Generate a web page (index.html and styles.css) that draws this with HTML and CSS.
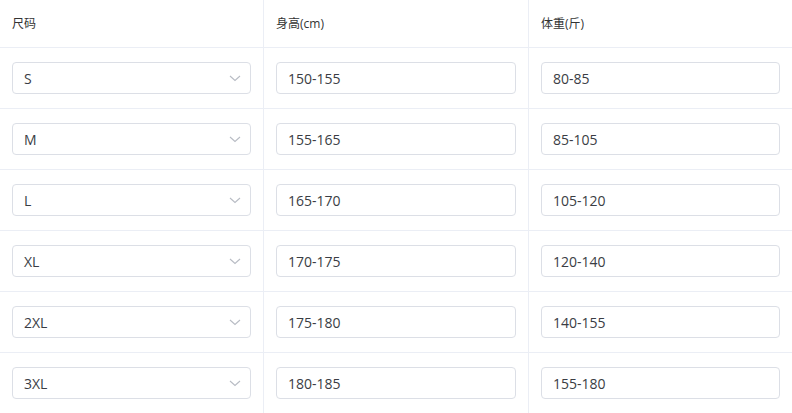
FILE: index.html
```html
<!DOCTYPE html>
<html lang="zh">
<head>
<meta charset="utf-8">
<link rel="stylesheet" href="styles.css">
</head>
<body>
<div class="table">
  <div class="cell head">尺码</div>
  <div class="cell head">身高(cm)</div>
  <div class="cell head last">体重(斤)</div>

  <div class="cell"><div class="select"><span>S</span><svg class="chev" viewBox="0 0 12 7" width="12" height="7"><path d="M1 1 L6 5.5 L11 1" fill="none" stroke="#b8bcc4" stroke-width="1.1"/></svg></div></div>
  <div class="cell"><div class="input">150-155</div></div>
  <div class="cell last"><div class="input">80-85</div></div>

  <div class="cell"><div class="select"><span>M</span><svg class="chev" viewBox="0 0 12 7" width="12" height="7"><path d="M1 1 L6 5.5 L11 1" fill="none" stroke="#b8bcc4" stroke-width="1.1"/></svg></div></div>
  <div class="cell"><div class="input">155-165</div></div>
  <div class="cell last"><div class="input">85-105</div></div>

  <div class="cell"><div class="select"><span>L</span><svg class="chev" viewBox="0 0 12 7" width="12" height="7"><path d="M1 1 L6 5.5 L11 1" fill="none" stroke="#b8bcc4" stroke-width="1.1"/></svg></div></div>
  <div class="cell"><div class="input">165-170</div></div>
  <div class="cell last"><div class="input">105-120</div></div>

  <div class="cell"><div class="select"><span>XL</span><svg class="chev" viewBox="0 0 12 7" width="12" height="7"><path d="M1 1 L6 5.5 L11 1" fill="none" stroke="#b8bcc4" stroke-width="1.1"/></svg></div></div>
  <div class="cell"><div class="input">170-175</div></div>
  <div class="cell last"><div class="input">120-140</div></div>

  <div class="cell"><div class="select"><span>2XL</span><svg class="chev" viewBox="0 0 12 7" width="12" height="7"><path d="M1 1 L6 5.5 L11 1" fill="none" stroke="#b8bcc4" stroke-width="1.1"/></svg></div></div>
  <div class="cell"><div class="input">175-180</div></div>
  <div class="cell last"><div class="input">140-155</div></div>

  <div class="cell"><div class="select"><span>3XL</span><svg class="chev" viewBox="0 0 12 7" width="12" height="7"><path d="M1 1 L6 5.5 L11 1" fill="none" stroke="#b8bcc4" stroke-width="1.1"/></svg></div></div>
  <div class="cell"><div class="input">180-185</div></div>
  <div class="cell last"><div class="input">155-180</div></div>
</div>
</body>
</html>
```

FILE: styles.css
```css
html, body {
  margin: 0;
  padding: 0;
  background: #fff;
}
body {
  font-family: "Open Sans", "Noto Sans CJK SC", sans-serif;
  color: #303133;
  overflow: hidden;
}
.table {
  display: grid;
  grid-template-columns: 264px 265px 263px;
  grid-template-rows: 48px repeat(6, 61px);
  width: 792px;
}
.cell {
  box-sizing: border-box;
  border-right: 1px solid #ebeef5;
  border-bottom: 1px solid #ebeef5;
  padding: 0 12px;
  display: flex;
  align-items: center;
}
.cell.last {
  border-right: none;
}
.head {
  font-size: 12px;
  color: #333;
  padding-bottom: 1px;
}
.select, .input {
  box-sizing: border-box;
  width: 100%;
  height: 32px;
  border: 1px solid #dcdfe6;
  border-radius: 4px;
  padding: 0 11px;
  display: flex;
  align-items: center;
  font-size: 14px;
  color: #3a3d44;
}
.select {
  justify-content: space-between;
}
.chev {
  margin-right: -2px;
  margin-top: 1px;
}
```
